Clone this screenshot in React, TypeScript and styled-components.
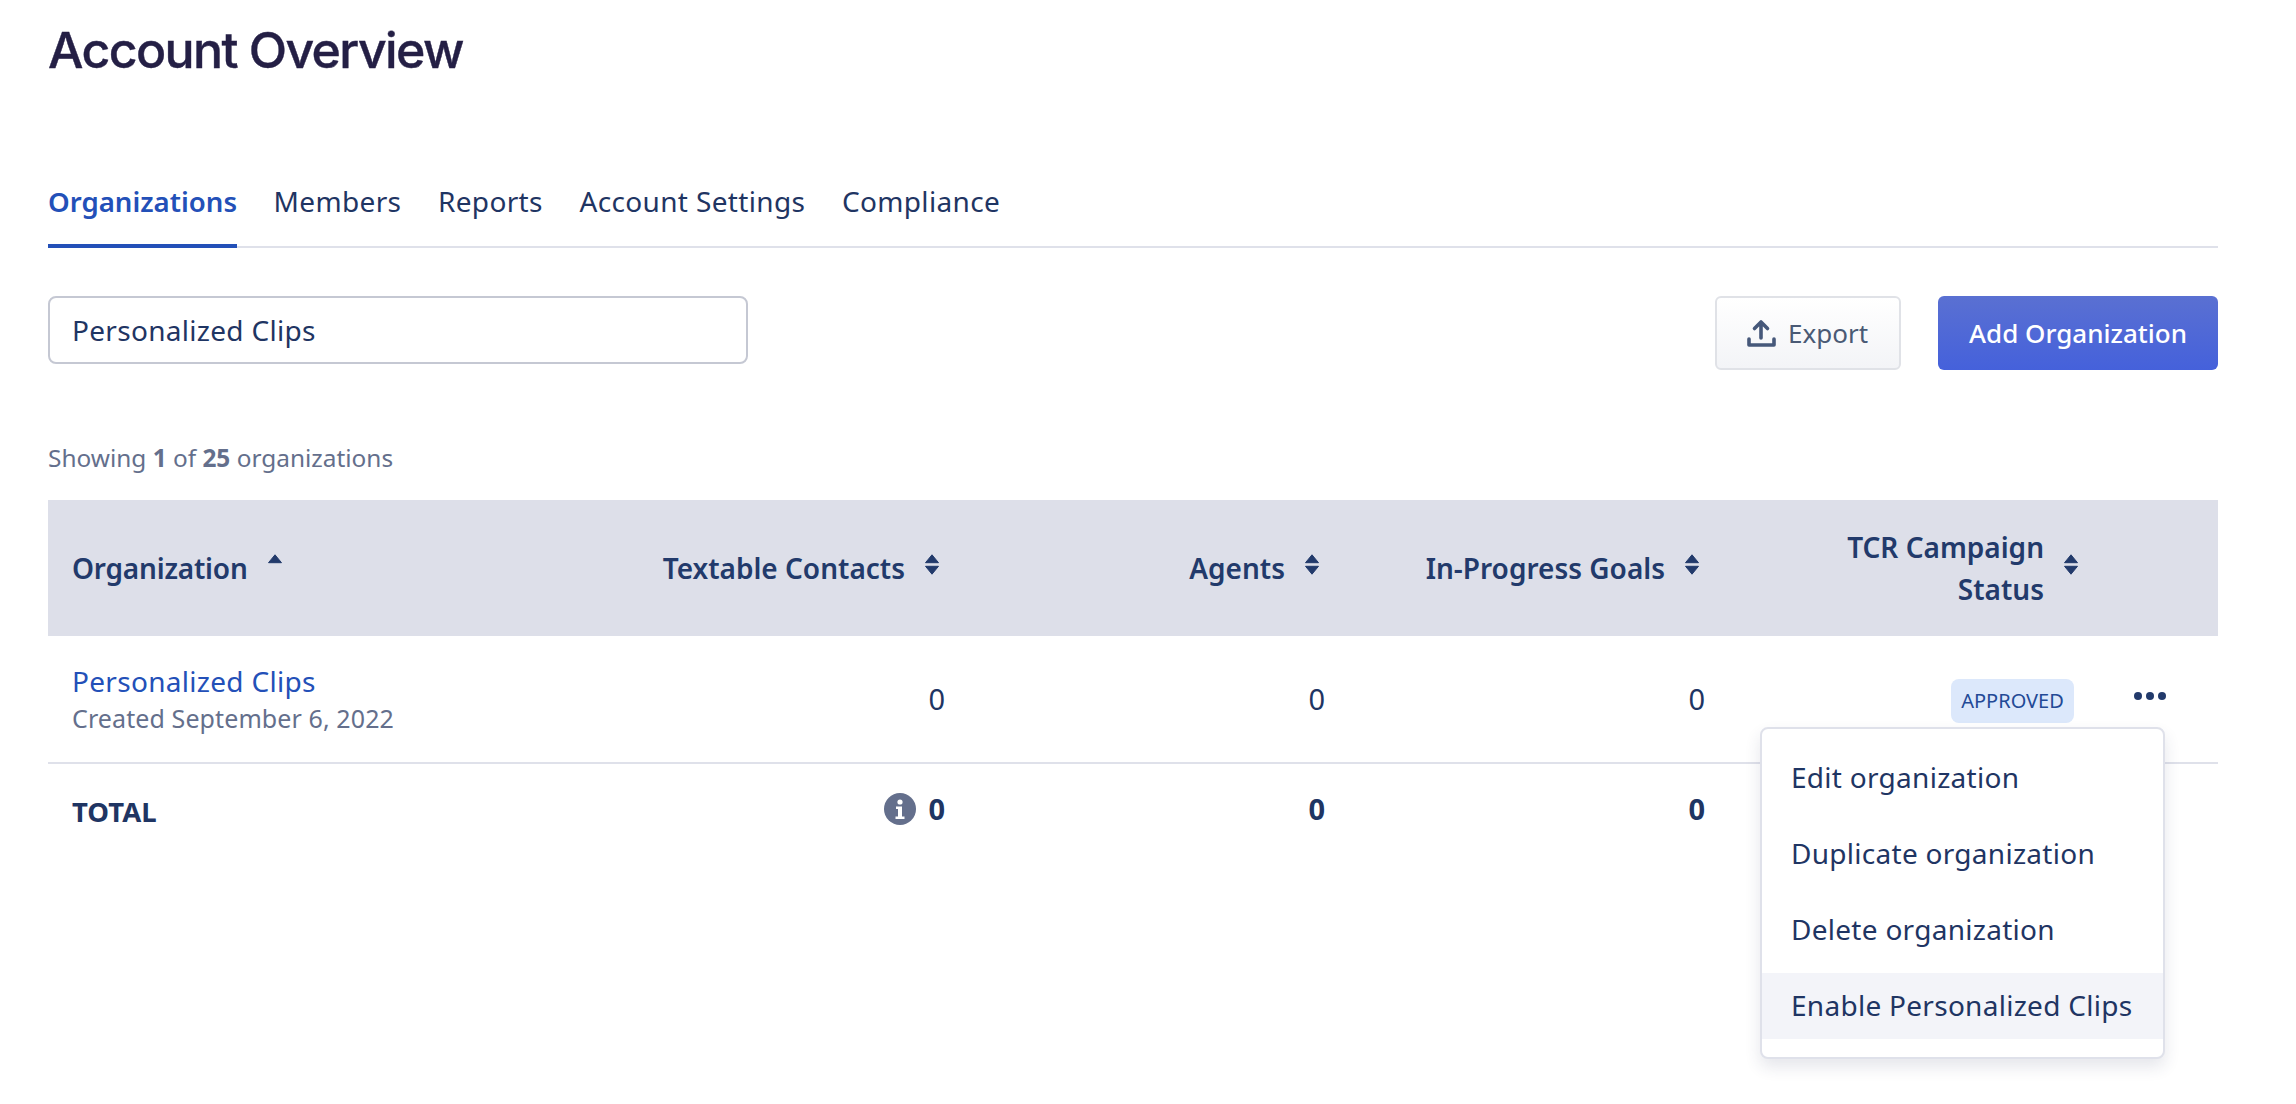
import React from "react";
import styled, { createGlobalStyle } from "styled-components";

const GlobalStyle = createGlobalStyle`
  html, body {
    margin: 0;
    padding: 0;
    background: #fff;
  }
  body {
    font-family: "Noto Sans", "Open Sans", sans-serif;
    color: #1f3563;
  }
`;

const COLUMNS = "560px 361px 380px 380px 379px 110px";

const Page = styled.div`
  width: 2170px;
  height: 1104px;
  padding-left: 48px;
  overflow: hidden;
`;

const Title = styled.h1`
  margin: 0;
  height: 102px;
  font-family: Inter, sans-serif;
  font-size: 50px;
  line-height: 100px;
  font-weight: 500;
  letter-spacing: -1.6px;
  -webkit-text-stroke: 0.4px #241f45;
  color: #241f45;
`;

const Tabs = styled.nav`
  display: flex;
  gap: 36.5px;
  height: 146px;
  align-items: flex-end;
  box-sizing: border-box;
  border-bottom: 2px solid #dfe1ea;
`;

const Tab = styled.a<{ $active?: boolean }>`
  display: block;
  height: 64px;
  margin-bottom: -2px;
  box-sizing: border-box;
  font-size: ${(p) => (p.$active ? "27.6px" : "28px")};
  letter-spacing: ${(p) => (p.$active ? "0" : "0.36px")};
  line-height: 35px;
  font-weight: ${(p) => (p.$active ? 600 : 400)};
  color: ${(p) => (p.$active ? "#2350b8" : "#1f3563")};
  border-bottom: 4px solid ${(p) => (p.$active ? "#2350b8" : "transparent")};
`;

const Toolbar = styled.div`
  display: flex;
  align-items: flex-start;
  margin-top: 48px;
  height: 74px;
`;

const Search = styled.div`
  width: 700px;
  height: 68px;
  box-sizing: border-box;
  border: 2px solid #c5c8d3;
  border-radius: 8px;
  padding-left: 22px;
  font-size: 28px;
  letter-spacing: 0.3px;
  line-height: 65px;
`;

const ExportButton = styled.button`
  display: flex;
  align-items: center;
  gap: 12px;
  width: 186px;
  height: 74px;
  margin-left: auto;
  padding: 0 0 0 30px;
  box-sizing: border-box;
  border: 2px solid #e0e2e7;
  border-radius: 6px;
  background: linear-gradient(#ffffff, #f3f4f7);
  font-family: inherit;
  font-size: 26px;
  color: #4a5a75;
`;

const AddButton = styled.button`
  width: 280px;
  height: 74px;
  margin-left: 37px;
  padding: 0;
  border: 0;
  border-radius: 6px;
  background: linear-gradient(#5a70d2, #4561db);
  font-family: inherit;
  font-size: 26px;
  font-weight: 500;
  color: #fff;
`;

const Showing = styled.div`
  margin-top: 72px;
  height: 58px;
  font-size: 24.4px;
  line-height: 32px;
  color: #646f8c;
  b {
    font-weight: 700;
  }
`;

const Table = styled.div`
  position: relative;
`;

const HeadRow = styled.div`
  display: grid;
  grid-template-columns: ${COLUMNS};
  height: 136px;
  align-items: center;
  background: #dddfe9;
`;

const HeadCell = styled.div<{ $left?: boolean }>`
  display: flex;
  align-items: center;
  justify-content: ${(p) => (p.$left ? "flex-start" : "flex-end")};
  gap: 12px;
  padding: ${(p) => (p.$left ? "0 0 0 24px" : "0 24px 0 0")};
  font-size: 28px;
  letter-spacing: ${(p) => (p.$left ? "-0.2px" : "0")};
  line-height: 42px;
  font-weight: 600;
  text-align: right;
  color: #223a6b;
`;

const SortBox = styled.span`
  display: flex;
  justify-content: center;
  box-sizing: border-box;
  width: 28px;
  padding-left: 2px;
  margin-top: -7px;
`;

const BodyRow = styled.div<{ $height: number; $border?: boolean }>`
  display: grid;
  grid-template-columns: ${COLUMNS};
  height: ${(p) => p.$height}px;
  box-sizing: border-box;
  align-items: center;
  border-bottom: ${(p) => (p.$border ? "2px solid #dfe1ea" : "0")};
`;

const NameCell = styled.div`
  padding-left: 24px;
`;

const OrgLink = styled.a`
  display: block;
  font-size: 28px;
  letter-spacing: 0.3px;
  line-height: 38px;
  color: #2350b8;
`;

const Created = styled.div`
  font-size: 25px;
  letter-spacing: 0.1px;
  line-height: 37px;
  color: #646f8c;
`;

const NumCell = styled.div<{ $bold?: boolean }>`
  display: flex;
  align-items: center;
  justify-content: flex-end;
  gap: 12px;
  padding-right: 24px;
  margin-bottom: ${(p) => (p.$bold ? "5px" : "2px")};
  font-size: 29px;
  font-weight: ${(p) => (p.$bold ? 700 : 400)};
`;

const TotalLabel = styled.div`
  padding-left: 24px;
  font-size: 27.5px;
  font-weight: 700;
`;

const StatusCell = styled.div`
  display: flex;
  justify-content: flex-end;
  padding: 4px 34px 0 0;
`;

const Badge = styled.span`
  width: 123px;
  height: 44px;
  border-radius: 8px;
  background: #dce8fb;
  color: #234a96;
  font-size: 20px;
  line-height: 43px;
  text-align: center;
`;

const MoreCell = styled.div`
  display: flex;
  justify-content: flex-end;
  padding: 0 52px 6px 0;
`;

const Menu = styled.div`
  position: absolute;
  left: 1712px;
  top: 227px;
  width: 405px;
  height: 332px;
  box-sizing: border-box;
  padding: 16px 0 0;
  display: flex;
  flex-direction: column;
  gap: 10px;
  background: #fff;
  border: 2px solid #dfe1ea;
  border-radius: 8px;
  box-shadow: 0 8px 16px rgba(40, 50, 90, 0.12);
`;

const MenuItem = styled.div<{ $hover?: boolean }>`
  height: 66px;
  padding-left: 29px;
  font-size: 28px;
  letter-spacing: 0.28px;
  line-height: 64px;
  background: ${(p) => (p.$hover ? "#f3f4f9" : "transparent")};
`;

const SortIcon = ({ up }: { up?: boolean }) => (
  <svg width="14" height="21" viewBox="0 0 14 21" fill="#223a6b" stroke="#223a6b" strokeWidth="1" strokeLinejoin="round">
    <path d="M7 0.8 L13.500 8.700 H0.500 Z" />
    {!up && <path d="M7 20.200 L13.500 12.300 H0.500 Z" />}
  </svg>
);

const UploadIcon = () => (
  <svg width="29" height="28" viewBox="0 0 29 28" fill="none" stroke="#46587a" strokeWidth="3.6" strokeLinecap="round" strokeLinejoin="round">
    <path d="M14 19V3M7.500 9.500L14 3l6.500 6.500" />
    <path d="M2 20v6h25v-6" />
  </svg>
);

const InfoIcon = () => (
  <svg width="32" height="32" viewBox="0 0 32 32">
    <circle cx="16" cy="16" r="16" fill="#646f8c" />
    <circle cx="16" cy="9" r="2.6" fill="#fff" />
    <path d="M12 13.5h6v10h2.5V26h-9v-2.500h2.500v-7.500H12z" fill="#fff" />
  </svg>
);

const DotsIcon = () => (
  <svg width="32" height="8" viewBox="0 0 32 8" fill="#223a6b">
    <circle cx="4" cy="4" r="4" />
    <circle cx="16" cy="4" r="4" />
    <circle cx="28" cy="4" r="4" />
  </svg>
);

const Sortable = ({ children, up }: { children: React.ReactNode; up?: boolean }) => (
  <>
    <span>{children}</span>
    <SortBox>
      <SortIcon up={up} />
    </SortBox>
  </>
);

export default function App() {
  return (
    <Page>
      <GlobalStyle />
      <Title>Account Overview</Title>
      <Tabs>
        <Tab $active>Organizations</Tab>
        <Tab>Members</Tab>
        <Tab>Reports</Tab>
        <Tab>Account Settings</Tab>
        <Tab>Compliance</Tab>
      </Tabs>
      <Toolbar>
        <Search>Personalized Clips</Search>
        <ExportButton>
          <UploadIcon />
          Export
        </ExportButton>
        <AddButton>Add Organization</AddButton>
      </Toolbar>
      <Showing>
        Showing <b>1</b> of <b>25</b> organizations
      </Showing>
      <Table>
        <HeadRow>
          <HeadCell $left>
            <Sortable up>Organization</Sortable>
          </HeadCell>
          <HeadCell>
            <Sortable>Textable Contacts</Sortable>
          </HeadCell>
          <HeadCell>
            <Sortable>Agents</Sortable>
          </HeadCell>
          <HeadCell>
            <Sortable>In-Progress Goals</Sortable>
          </HeadCell>
          <HeadCell>
            <Sortable>
              TCR Campaign
              <br />
              Status
            </Sortable>
          </HeadCell>
          <div />
        </HeadRow>
        <BodyRow $height={128} $border>
          <NameCell>
            <OrgLink>Personalized Clips</OrgLink>
            <Created>Created September 6, 2022</Created>
          </NameCell>
          <NumCell>0</NumCell>
          <NumCell>0</NumCell>
          <NumCell>0</NumCell>
          <StatusCell>
            <Badge>APPROVED</Badge>
          </StatusCell>
          <MoreCell>
            <DotsIcon />
          </MoreCell>
        </BodyRow>
        <BodyRow $height={94}>
          <TotalLabel>TOTAL</TotalLabel>
          <NumCell $bold>
            <InfoIcon />0
          </NumCell>
          <NumCell $bold>0</NumCell>
          <NumCell $bold>0</NumCell>
        </BodyRow>
        <Menu>
          <MenuItem>Edit organization</MenuItem>
          <MenuItem>Duplicate organization</MenuItem>
          <MenuItem>Delete organization</MenuItem>
          <MenuItem $hover>Enable Personalized Clips</MenuItem>
        </Menu>
      </Table>
    </Page>
  );
}
